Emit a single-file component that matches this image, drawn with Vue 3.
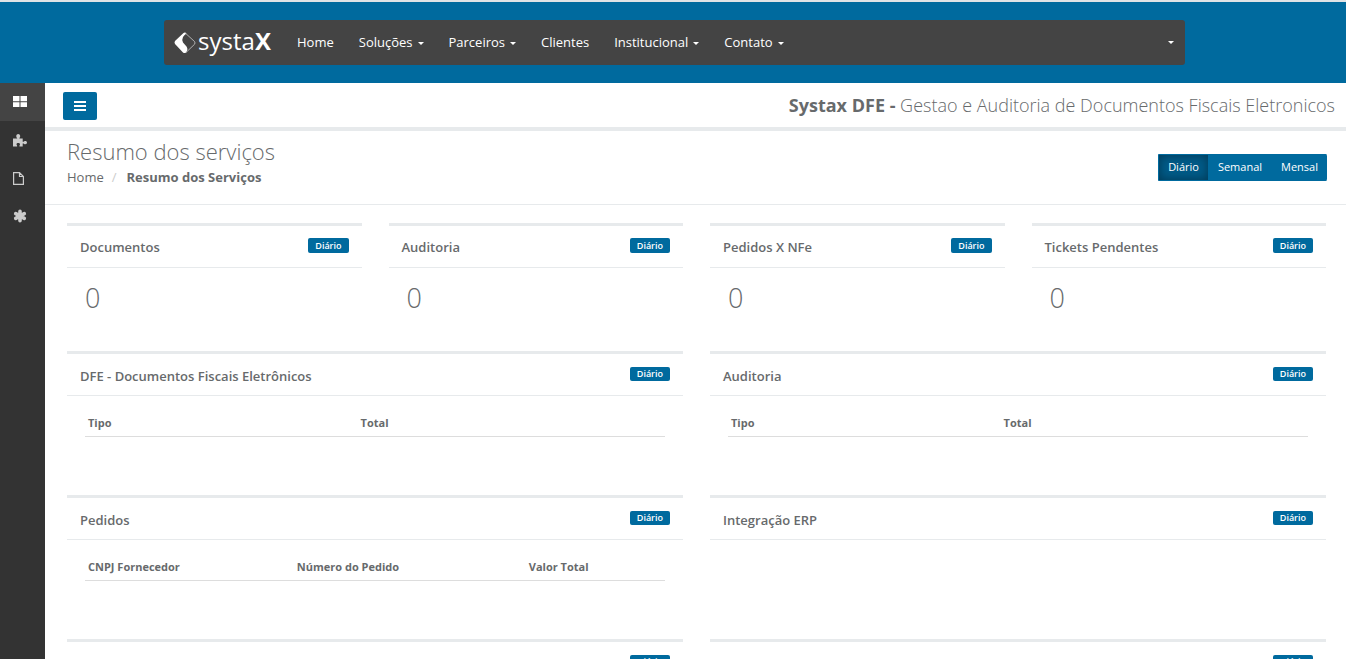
<script setup>
import { ref } from 'vue'

const menu = [
  { label: 'Home' },
  { label: 'Soluções', drop: true },
  { label: 'Parceiros', drop: true },
  { label: 'Clientes' },
  { label: 'Institucional', drop: true },
  { label: 'Contato', drop: true },
]
const periods = ['Diário', 'Semanal', 'Mensal']
const period = ref('Diário')
const counters = ['Documentos', 'Auditoria', 'Pedidos X NFe', 'Tickets Pendentes']
const panels = [
  { title: 'DFE - Documentos Fiscais Eletrônicos', kind: 'two', cols: ['Tipo', 'Total'] },
  { title: 'Auditoria', kind: 'two', cols: ['Tipo', 'Total'] },
  { title: 'Pedidos', kind: 'three', cols: ['CNPJ Fornecedor', 'Número do Pedido', 'Valor Total'] },
  { title: 'Integração ERP' },
  { title: '' },
  { title: '' },
]
</script>

<template>
  <div class="page">
    <header class="banner">
      <nav class="nav" aria-label="Principal">
        <a class="logo" href="#" aria-label="systax">
          <svg width="22" height="22" viewBox="0 0 22 22" aria-hidden="true">
            <path d="M9.500 1 L1 9 Q0 10.500 1 12 L9 20.500 Q10.500 21.600 12 20.500 Q14.500 17.500 12.500 14.500 L9 10.500 Q7.500 8 9 5 Q10 3 12.500 1.500 Q11 0 9.500 1Z" fill="#fff" />
            <path d="M11 .800 L20.500 9.500 Q21.500 11 20.500 12.300 L12 20.500" fill="none" stroke="#ccc" stroke-width="0.800" />
          </svg>
          <span class="word">systa<span class="word-x">x</span></span>
        </a>
        <a v-for="m in menu" :key="m.label" href="#" class="nav-link">{{ m.label }}<i v-if="m.drop" class="caret"></i></a>
        <button class="user" type="button" aria-label="Conta"><i class="caret"></i></button>
      </nav>
    </header>

    <div class="shell">
      <aside class="side">
        <a href="#" class="side-item active" aria-label="Resumo">
          <svg width="14" height="12" viewBox="0 0 14 12"><path d="M0 0h6.500v5.300H0zM7.500 0H14v5.300H7.500zM0 6.300h6.500V11H0zM7.500 6.300H14V11H7.500z" fill="#fff" /></svg>
        </a>
        <a href="#" class="side-item" aria-label="Módulos">
          <svg width="14" height="13" viewBox="0 0 14 13"><path d="M0 4.500h4.300C3.600 3.700 3.200 3 3.200 2 3.400 .8 4.200 0 5.200 0s1.900.8 2 2C7.200 3 6.700 3.700 6.200 4.500h3.500v3.200c1 .3 1.500-.8 2.600-.7 1 0 1.700.7 1.700 1.600s-.7 1.700-1.700 1.700c-1 0-1.600-1-2.600-.7V12.500H6.500c-.3-1 .6-1.300.5-2.200 0-.8-.9-1.300-1.800-1.300s-1.700.5-1.700 1.300c0 .9.900 1.200.6 2.200H0z" fill="#ccc" /></svg>
        </a>
        <a href="#" class="side-item" aria-label="Documentos">
          <svg width="14" height="13" viewBox="0 0 14 13"><path d="M.6 .6h5.900L10.400 4.500v7.900H.6zM6.500 .6v3.900h3.900" fill="none" stroke="#ccc" stroke-width="1.200" /></svg>
        </a>
        <a href="#" class="side-item" aria-label="Configurações">
          <svg width="14" height="14" viewBox="0 0 14 14"><path d="M7 2.200v9.600M2.700 4.600l8.600 4.800M2.700 9.400l8.600-4.800" fill="none" stroke="#ccc" stroke-width="3.600" stroke-linecap="round" /></svg>
        </a>
      </aside>

      <main class="main">
        <div class="topbar">
          <button class="toggle" type="button" aria-label="Menu">
            <svg width="12" height="10" viewBox="0 0 12 10"><path d="M0 1h12M0 5h12M0 9h12" stroke="#fff" stroke-width="2" /></svg>
          </button>
          <p class="product"><b>Systax DFE -</b> Gestao e Auditoria de Documentos Fiscais Eletronicos</p>
        </div>

        <div class="heading">
          <div>
            <h1>Resumo dos serviços</h1>
            <ol class="crumbs">
              <li><a href="#">Home</a></li>
              <li class="sep" aria-hidden="true">/</li>
              <li><strong>Resumo dos Serviços</strong></li>
            </ol>
          </div>
          <div class="group">
            <button v-for="p in periods" :key="p" type="button" :class="{ on: p === period }" @click="period = p">{{ p }}</button>
          </div>
        </div>

        <div class="cards">
          <section v-for="c in counters" :key="c" class="card counter">
            <div class="card-head"><h2>{{ c }}</h2><span class="badge">{{ period }}</span></div>
            <p class="num">0</p>
          </section>
          <section v-for="(p, i) in panels" :key="i" class="card panel">
            <div class="card-head"><h2>{{ p.title }}</h2><span class="badge">{{ period }}</span></div>
            <div v-if="p.cols" class="body">
              <table :class="p.kind">
                <thead><tr><th v-for="h in p.cols" :key="h" scope="col">{{ h }}</th></tr></thead>
              </table>
            </div>
          </section>
        </div>
      </main>
    </div>
  </div>
</template>

<style>
body { background: #fff; }
</style>

<style scoped>
* { box-sizing: border-box; }
.page { height: 100vh; overflow: hidden; display: flex; flex-direction: column; font-family: "Open Sans", "Noto Sans", sans-serif; font-size: 13px; color: #676a6c; }
a { color: inherit; text-decoration: none; }
button { font: inherit; border: 0; cursor: pointer; }
h1, h2, p, ol { margin: 0; padding: 0; }
.banner { flex: none; background: #006a9e; border-top: 2px solid #dfe3e6; padding: 18px 0 18px 3px; }
.nav { max-width: 1021px; height: 45px; margin: 0 auto; padding: 0 10px; background: #444; border-radius: 3px; display: flex; align-items: center; gap: 25px; color: #fff; }
.logo { display: flex; align-items: center; gap: 2px; width: 98px; height: 45px; }
.logo svg { flex: none; }
.word { font-size: 24px; line-height: 28px; padding-bottom: 6px; white-space: nowrap; }
.word-x { font-size: 30px; line-height: 28px; font-weight: 600; }
.nav-link { display: flex; align-items: center; white-space: nowrap; line-height: 18px; padding-bottom: 2px; }
.caret { width: 0; height: 0; border: 3px solid transparent; border-top-color: #fff; border-bottom: 0; margin-left: 5px; margin-top: 3px; }
.user { margin-left: auto; background: none; padding: 8px 1px; }
.user .caret { display: block; margin-left: 0; margin-top: 0; }
.shell { flex: 1; min-height: 0; display: flex; }
.side { flex: none; width: 45px; background: #333; }
.side-item { height: 38px; padding-left: 13px; display: flex; align-items: center; }
.side-item.active { background: #444; }
.main { flex: 1; min-width: 0; }
.topbar { height: 48px; border-bottom: 4px solid #e7eaec; padding: 0 11px 0 18px; display: flex; align-items: center; justify-content: space-between; }
.toggle { width: 34px; height: 28px; margin-top: 2px; padding: 0; background: #006a9e; border-radius: 2px; display: flex; align-items: center; justify-content: center; }
.product { font-size: 18px; line-height: 24px; font-weight: 300; }
.product b { font-weight: 700; }
.heading { height: 74px; border-bottom: 1px solid #e7eaec; padding: 6px 19px 0 22px; display: flex; justify-content: space-between; }
h1 { font-size: 22px; line-height: 28px; font-weight: 300; }
.crumbs { list-style: none; display: flex; line-height: 20px; padding-top: 2px; }
.sep { color: #ccc; padding: 0 10px 0 8px; }
.group { display: flex; height: 27px; margin-top: 17px; border-radius: 2px; overflow: hidden; background: #006a9e; }
.group button { background: none; color: #fff; font-size: 11px; line-height: 16px; padding: 0 9px 2px; border: 1px solid #006a9e; border-right-width: 0; }
.group .on { background: #005b88; box-shadow: inset 0 0 10px 1px #003c5a; }
.cards { display: grid; grid-template-columns: repeat(4, 1fr); column-gap: 27px; padding: 18px 20px 0 22px; }
.card { border-top: 3px solid #e7eaec; }
.counter { height: 128px; }
.panel { grid-column: span 2; height: 144px; }
.card-head { height: 42px; border-bottom: 1px solid #e7eaec; padding: 0 13px; display: flex; align-items: flex-start; justify-content: space-between; }
h2 { font-size: 13px; line-height: 20px; font-weight: 600; padding-top: 11px; }
.badge { margin-top: 12px; height: 15px; border-radius: 2px; padding: 0 7px; background: #006a9e; color: #fff; font-size: 9px; line-height: 15px; font-weight: 600; }
.panel h2 { padding-top: 12px; }
.panel .badge { margin-top: 13px; height: 14px; line-height: 14px; }
.num { font-size: 27px; line-height: 30px; font-weight: 300; padding: 15px 18px; }
.body { padding: 15px 18px; }
table { width: 100%; border-collapse: collapse; table-layout: fixed; }
th { text-align: left; font-size: 11px; line-height: 16px; padding: 4px 3px 5px; border-bottom: 1px solid #ddd; }
.two th:first-child { width: 47%; }
.three th:first-child { width: 36%; }
.three th:nth-child(2) { width: 40%; }
</style>
